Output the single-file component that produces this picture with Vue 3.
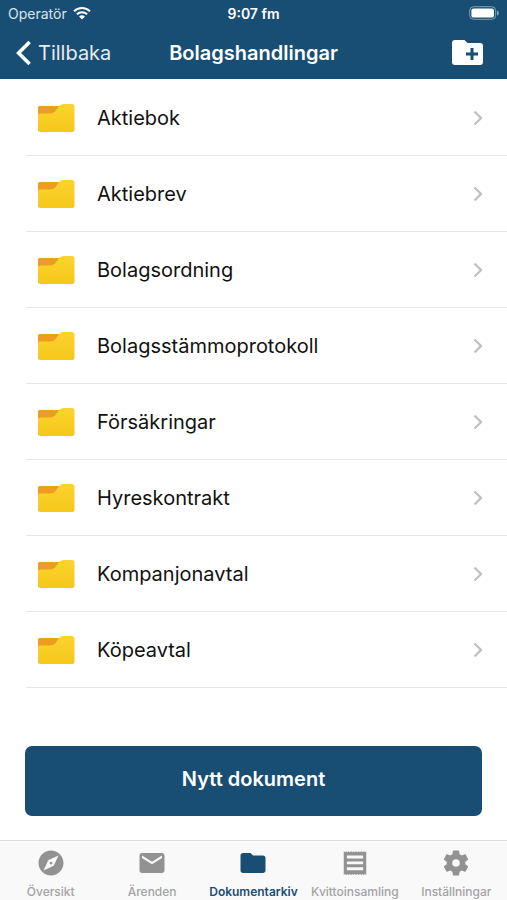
<template>
  <div class="app">
    <header class="header">
      <div class="status-bar">
        <div class="carrier">
          <span>Operatör</span>
          <svg class="wifi" viewBox="0 0 18 14" aria-hidden="true">
            <path d="M1 5.2a11.4 11.4 0 0 1 16 0" />
            <path d="M3.9 8.3a7.3 7.3 0 0 1 10.2 0" />
            <path class="wifi-dot" d="M9 13.6 6 10.6a4.3 4.3 0 0 1 6 0z" />
          </svg>
        </div>
        <span class="time">9:07 fm</span>
        <svg class="battery" viewBox="0 0 30 14" aria-hidden="true">
          <rect class="battery-frame" x="0.7" y="0.7" width="26" height="12.6" rx="4" />
          <rect x="2.4" y="2.4" width="22.6" height="9.2" rx="2.2" fill="#fff" />
          <path d="M28 4.6q1.8 0.8 1.8 2.4t-1.8 2.4z" fill="#fff" fill-opacity="0.5" />
        </svg>
      </div>
      <div class="nav-bar">
        <button class="back-btn" type="button">
          <svg class="back-icon" viewBox="0 0 16 26" aria-hidden="true">
            <path d="M13.6 2 2.6 13l11 11" />
          </svg>
          <span>Tillbaka</span>
        </button>
        <h1 class="title">Bolagshandlingar</h1>
        <button class="add-btn" type="button" aria-label="Ny mapp">
          <svg class="add-icon" viewBox="0 0 31 25" aria-hidden="true">
            <path
              fill="#fff"
              fill-rule="evenodd"
              d="M3 0h9.4l3.2 3H28a3 3 0 0 1 3 3v16a3 3 0 0 1-3 3H3a3 3 0 0 1-3-3V3a3 3 0 0 1 3-3zM18.5 8v4.6H14v2.800h4.500V20h3v-4.600H26v-2.800h-4.500V8z"
            />
          </svg>
        </button>
      </div>
    </header>

    <main class="content">
      <ul class="folder-list">
        <li v-for="folder in folders" :key="folder" class="folder-item">
          <a class="folder-link" href="#">
            <svg class="folder-icon" viewBox="0 0 38 30" aria-hidden="true">
              <defs>
                <linearGradient id="folder-front" x1="0" y1="0" x2="0" y2="1">
                  <stop offset="0" stop-color="#fcd42f" />
                  <stop offset="1" stop-color="#f5c71a" />
                </linearGradient>
              </defs>
              <path d="M2.5 3H24v12H1V4.5Q1 3 2.5 3z" fill="#ee9c22" />
              <path
                d="M1 12Q1 10.5 2.5 10.5H14C20 10.5 20 1 26.500 1H35Q37.500 1 37.500 3.500V26.500Q37.500 29 35 29H3.500Q1 29 1 26.500z"
                fill="url(#folder-front)"
              />
            </svg>
            <span class="folder-name">{{ folder }}</span>
            <svg class="chevron" viewBox="0 0 10 16" aria-hidden="true">
              <path d="M1.500 1.500 8 8l-6.500 6.500" />
            </svg>
          </a>
        </li>
      </ul>
      <button class="new-btn" type="button">Nytt dokument</button>
    </main>

    <nav class="tab-bar">
      <a
        v-for="tab in tabs"
        :key="tab.label"
        href="#"
        class="tab"
        :class="{ active: tab.label === activeTab }"
        @click.prevent="activeTab = tab.label"
      >
        <svg class="tab-icon" viewBox="0 0 24 24" aria-hidden="true">
          <path :d="tab.icon" fill="currentColor" fill-rule="evenodd" />
        </svg>
        <span>{{ tab.label }}</span>
      </a>
    </nav>
  </div>
</template>

<script setup>
import { ref } from 'vue'

const folders = [
  'Aktiebok',
  'Aktiebrev',
  'Bolagsordning',
  'Bolagsstämmoprotokoll',
  'Försäkringar',
  'Hyreskontrakt',
  'Kompanjonavtal',
  'Köpeavtal'
]

const activeTab = ref('Dokumentarkiv')

const tabs = [
  {
    label: 'Översikt',
    icon: 'M12 10.9c-.61 0-1.1.49-1.1 1.1s.49 1.1 1.1 1.1c.61 0 1.1-.49 1.1-1.1s-.49-1.1-1.1-1.1zM12 2C6.480 2 2 6.480 2 12s4.480 10 10 10 10-4.480 10-10S17.520 2 12 2zm2.190 12.190L6 18l3.810-8.190L18 6l-3.810 8.190z'
  },
  {
    label: 'Ärenden',
    icon: 'M20 4H4c-1.100 0-1.990.9-1.990 2L2 18c0 1.100.9 2 2 2h16c1.100 0 2-.9 2-2V6c0-1.100-.9-2-2-2zm0 4l-8 5-8-5V6l8 5 8-5v2z'
  },
  {
    label: 'Dokumentarkiv',
    icon: 'M10 4H4c-1.100 0-1.990.9-1.990 2L2 18c0 1.100.9 2 2 2h16c1.100 0 2-.9 2-2V8c0-1.100-.9-2-2-2h-8l-2-2z'
  },
  {
    label: 'Kvittoinsamling',
    icon: 'M3 2.500l1 .8 1-.8 1 .8 1-.8 1 .8 1-.8 1 .8 1-.8 1 .8 1-.8 1 .8 1-.8 1 .8 1-.8 1 .8 1-.8 1 .8 1-.8v19l-1-.8-1 .8-1-.8-1 .8-1-.8-1 .8-1-.8-1 .8-1-.8-1 .8-1-.8-1 .8-1-.8-1 .8-1-.8-1 .8-1-.8-1 .8zM5.500 6v2.300h13V6zM5.500 10.700v2.300h13v-2.300zM5.500 15.400v2.300h13v-2.300z'
  },
  {
    label: 'Inställningar',
    icon: 'M19.430 12.980c.04-.32.07-.64.07-.98s-.03-.66-.07-.98l2.110-1.650c.19-.15.24-.42.12-.64l-2-3.460c-.12-.22-.39-.3-.61-.22l-2.490 1c-.52-.4-1.080-.73-1.690-.98l-.38-2.650C14.460 2.180 14.250 2 14 2h-4c-.25 0-.46.18-.49.42l-.38 2.650c-.61.25-1.170.59-1.690.98l-2.490-1c-.23-.09-.49 0-.61.22l-2 3.460c-.13.22-.07.49.12.64l2.110 1.650c-.04.32-.07.65-.07.98s.03.66.07.98l-2.110 1.650c-.19.15-.24.42-.12.64l2 3.460c.12.22.39.3.61.22l2.490-1c.52.4 1.080.73 1.690.98l.38 2.650c.03.24.24.42.49.42h4c.25 0 .46-.18.49-.42l.38-2.650c.61-.25 1.170-.59 1.690-.98l2.490 1c.23.09.49 0 .61-.22l2-3.460c.12-.22.07-.49-.12-.64l-2.110-1.650zM12 15a3 3 0 1 1 0-6 3 3 0 0 1 0 6z'
  }
]
</script>

<style>
body {
  margin: 0;
  background: #fff;
}
</style>

<style scoped>
.app {
  display: flex;
  flex-direction: column;
  min-height: 100vh;
  background: #fff;
  color: #111;
  font-family: Inter, 'Liberation Sans', sans-serif;
}
button {
  border: none;
  font-family: inherit;
  cursor: pointer;
}
a {
  color: inherit;
  text-decoration: none;
}
.header {
  height: 79px;
  background: #194e74;
  color: #fff;
}
.status-bar,
.nav-bar {
  display: grid;
  grid-template-columns: 1fr auto 1fr;
  align-items: center;
}
.status-bar {
  height: 26px;
  padding: 0 8px;
  font-size: 14px;
}
.carrier {
  display: flex;
  align-items: center;
  gap: 6px;
  color: #d9e4ec;
}
.wifi {
  width: 18px;
  height: 14px;
  fill: none;
  stroke: #fff;
  stroke-width: 2;
}
.wifi .wifi-dot {
  fill: #fff;
  stroke: none;
}
.time {
  font-weight: 600;
}
.battery {
  justify-self: end;
  width: 30px;
  height: 14px;
}
.battery-frame {
  fill: none;
  stroke: #fff;
  stroke-opacity: 0.45;
}
.nav-bar {
  height: 53px;
  padding: 0 16px;
}
.back-btn {
  display: flex;
  align-items: center;
  justify-self: start;
  gap: 6px;
  padding: 0;
  background: none;
  color: #e3ecf2;
  font-size: 20px;
}
.back-icon {
  width: 16px;
  height: 26px;
  fill: none;
  stroke: #fff;
  stroke-width: 3.6;
}
.title {
  margin: 0;
  font-size: 20px;
  font-weight: 600;
}
.add-btn {
  display: flex;
  justify-self: end;
  padding: 0 8px;
  background: none;
}
.add-icon {
  width: 31px;
  height: 25px;
}
.content {
  flex: 1;
  padding-top: 1px;
}
.folder-list {
  margin: 0;
  padding: 0;
  list-style: none;
}
.folder-item {
  margin-left: 26px;
  border-bottom: 1px solid #e6e6e6;
}
.folder-link {
  display: flex;
  align-items: center;
  height: 75px;
  padding: 0 24px 0 11px;
  font-size: 20px;
}
.folder-icon {
  width: 38px;
  height: 30px;
}
.folder-name {
  flex: 1;
  margin-left: 22px;
}
.chevron {
  width: 10px;
  height: 16px;
  fill: none;
  stroke: #c2c2c4;
  stroke-width: 2.4;
}
.new-btn {
  display: block;
  width: calc(100% - 50px);
  height: 70px;
  margin: 58px 25px 24px;
  padding: 0 0 4px;
  border-radius: 7px;
  background: #194e74;
  color: #fff;
  font-size: 20px;
  font-weight: 600;
}
.tab-bar {
  display: grid;
  grid-template-columns: repeat(5, 1fr);
  height: 59px;
  border-top: 1px solid #dcdcdc;
  background: #f9f9f9;
}
.tab {
  display: flex;
  flex-direction: column;
  align-items: center;
  gap: 6px;
  padding-top: 7px;
  color: #929292;
  font-size: 12px;
  font-weight: 500;
  line-height: 16px;
  white-space: nowrap;
}
.tab span {
  color: #a3a3a3;
}
.tab-icon {
  width: 30px;
  height: 30px;
}
.tab.active,
.tab.active span {
  color: #194e74;
}
.tab.active {
  font-weight: 600;
}
</style>
